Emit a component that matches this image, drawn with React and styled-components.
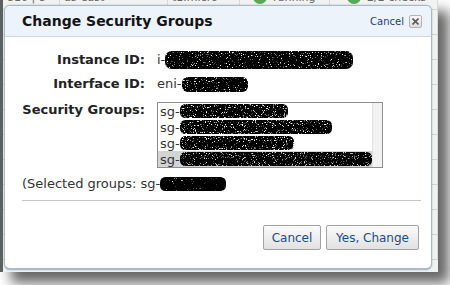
import React, { useId } from "react";
import styled, { createGlobalStyle } from "styled-components";

const GlobalStyle = createGlobalStyle`
  html, body { margin: 0; padding: 0; background: #ffffff; }
  body {
    width: 450px;
    height: 285px;
    overflow: hidden;
    font-family: "DejaVu Sans", Verdana, sans-serif;
  }
`;

const Frame = styled.div`
  position: relative;
  width: 438px;
  height: 272px;
  box-sizing: border-box;
  background: #f1f2f2;
  border-left: 3px solid #5c6060;
  box-shadow: 11px 11px 12px rgba(0, 0, 0, 0.6);
  overflow: hidden;
`;

const PageTable = styled.div`
  display: flex;
  flex-direction: column;
  margin-top: -15px;
`;

const PageRow = styled.div`
  display: grid;
  grid-template-columns: 57px 108px 72px 90px 1fr;
  height: 24px;
  border-bottom: 1px solid #cfd3d3;
  font-size: 11px;
  color: #666;
`;

const PageCell = styled.div`
  display: flex;
  align-items: center;
  gap: 6px;
  padding-left: ${(p) => p.$pad || 4}px;
  border-right: 1px solid #d7dada;
  white-space: nowrap;
  overflow: hidden;
`;

const StatusDot = styled.span`
  width: 14px;
  height: 14px;
  border-radius: 50%;
  background: #5aa955;
  flex: none;
`;

const Dialog = styled.div`
  position: absolute;
  left: 1px;
  top: 5px;
  width: 428px;
  height: 265px;
  box-sizing: border-box;
  display: flex;
  flex-direction: column;
  background: #ffffff;
  border: 1px solid #a9b9c8;
  border-bottom: 2px solid #a7bccd;
  border-radius: 6px;
  overflow: hidden;
  box-shadow: 0 0 2px rgba(0, 0, 0, 0.25);
`;

const Header = styled.div`
  display: flex;
  align-items: center;
  justify-content: space-between;
  height: 30px;
  padding: 0 9px 0 17px;
  background: #edf3fa;
  border-bottom: 1px solid #c9d6e3;
`;

const Title = styled.h1`
  margin: 0;
  font-size: 14px;
  font-weight: bold;
  color: #141414;
`;

const HeaderActions = styled.div`
  display: flex;
  align-items: center;
  gap: 5px;
`;

const HeaderLink = styled.span`
  font-family: "DejaVu Sans", sans-serif;
  font-size: 10px;
  color: #1f3d78;
`;

const CloseBox = styled.span`
  width: 13px;
  height: 13px;
  box-sizing: border-box;
  display: flex;
  align-items: center;
  justify-content: center;
  border: 1px solid #b3b3b3;
  border-radius: 2px;
  background: linear-gradient(#f7f7f7, #dcdcdc);
`;

const Body = styled.div`
  display: flex;
  flex-direction: column;
  padding: 15px 10px 0 17px;
`;

const Form = styled.div`
  display: grid;
  grid-template-columns: 123px 1fr;
  column-gap: 12px;
  row-gap: 8px;
  align-items: start;
`;

const Label = styled.div`
  text-align: right;
  font-size: 13px;
  font-weight: bold;
  line-height: 16px;
  color: #222;
  margin-top: ${(p) => p.$offset || 0}px;
`;

const Value = styled.div`
  display: flex;
  align-items: center;
  font-size: 13px;
  line-height: 16px;
  height: 16px;
  color: #333;
  white-space: nowrap;
`;

const ListBox = styled.div`
  display: flex;
  width: 226px;
  height: 66px;
  box-sizing: border-box;
  margin-top: 2px;
  border: 1px solid #8d8d8d;
  background: #fff;
  overflow: hidden;
`;

const Options = styled.div`
  flex: 1;
  display: flex;
  flex-direction: column;
`;

const Option = styled.div`
  display: flex;
  align-items: center;
  height: 16px;
  padding-left: 2px;
  font-size: 13px;
  color: #333;
  white-space: nowrap;
  background: ${(p) => (p.$selected ? "#d4d4d4" : "transparent")};
`;

const ScrollTrack = styled.div`
  width: 12px;
  background: #f2f2f2;
  border-left: 1px solid #e3e3e3;
`;

const Selected = styled.div`
  display: flex;
  align-items: center;
  margin-top: 8px;
  font-size: 13px;
  line-height: 16px;
  height: 16px;
  color: #333;
  white-space: nowrap;
`;

const Separator = styled.div`
  height: 1px;
  margin-top: 8px;
  background: #c6c6c6;
`;

const ButtonRow = styled.div`
  display: flex;
  justify-content: flex-end;
  gap: 5px;
  margin-top: 24px;
  padding-right: 2px;
`;

const Button = styled.button`
  height: 25px;
  width: ${(p) => p.$w}px;
  padding: 0;
  font-family: "DejaVu Sans", Verdana, sans-serif;
  font-size: 12px;
  color: #1d4b88;
  border: 1px solid #a2a2a2;
  border-radius: 2px;
  background: linear-gradient(#fbfbfb, #e1e1e1);
  box-shadow: inset 0 1px 0 #fff;
`;

function Redaction({ w, h = 16, seed = 1, level = -1.8 }) {
  const id = useId().replace(/:/g, "");
  return (
    <svg width={w} height={h} style={{ flex: "none" }} aria-hidden="true">
      <defs>
        <filter id={`n${id}`} x="0" y="0" width="100%" height="100%">
          <feTurbulence type="fractalNoise" baseFrequency="0.9" numOctaves="2" seed={seed} result="t" />
          <feColorMatrix
            in="t"
            type="matrix"
            values={`0 0 0 0 0  0 0 0 0 0  0 0 0 0 0  7 0 0 0 ${level}`}
            result="m"
          />
          <feComposite in="m" in2="SourceGraphic" operator="in" />
        </filter>
      </defs>
      <rect x="0" y="1" width={w} height={h - 2} rx={h / 3} fill="#000" filter={`url(#n${id})`} />
    </svg>
  );
}

const groups = [
  { w: 108, seed: 3 },
  { w: 152, seed: 7 },
  { w: 114, seed: 11 },
  { w: 192, seed: 5, selected: true },
];

export default function App() {
  return (
    <>
      <GlobalStyle />
      <Frame>
        <PageTable>
          {[0, 1, 2, 3, 4, 5, 6, 7, 8, 9, 10].map((i) => (
            <PageRow key={i}>
              <PageCell>{i === 0 ? "810 | 8" : ""}</PageCell>
              <PageCell>{i === 0 ? "us-east" : ""}</PageCell>
              <PageCell>{i === 0 ? "t1.micro" : ""}</PageCell>
              <PageCell $pad={13}>{i === 0 && <StatusDot />}{i === 0 ? "running" : ""}</PageCell>
              <PageCell $pad={17}>{i === 0 && <StatusDot />}{i === 0 ? "2/2 checks" : ""}</PageCell>
            </PageRow>
          ))}
        </PageTable>
        <Dialog>
          <Header>
            <Title>Change Security Groups</Title>
            <HeaderActions>
              <HeaderLink>Cancel</HeaderLink>
              <CloseBox>
                <svg width="7" height="7" viewBox="0 0 7 7">
                  <path d="M0.5 0.5 L6.5 6.5 M6.5 0.5 L0.5 6.5" stroke="#5a5a5a" strokeWidth="1.6" />
                </svg>
              </CloseBox>
            </HeaderActions>
          </Header>
          <Body>
            <Form>
              <Label>Instance ID:</Label>
              <Value>
                i-
                <Redaction w={188} h={20} seed={2} level={-1.6} />
              </Value>
              <Label>Interface ID:</Label>
              <Value>
                eni-
                <Redaction w={66} h={17} seed={9} level={-1.6} />
              </Value>
              <Label $offset={2}>Security Groups:</Label>
              <ListBox>
                <Options>
                  {groups.map((g, i) => (
                    <Option key={i} $selected={g.selected}>
                      sg-
                      <Redaction w={g.w} h={16} seed={g.seed} level={-1.8} />
                    </Option>
                  ))}
                </Options>
                <ScrollTrack />
              </ListBox>
            </Form>
            <Selected>
              (Selected groups: sg-
              <Redaction w={66} h={16} seed={13} level={-1.2} />
            </Selected>
            <Separator />
            <ButtonRow>
              <Button $w={58}>Cancel</Button>
              <Button $w={93}>Yes, Change</Button>
            </ButtonRow>
          </Body>
        </Dialog>
      </Frame>
    </>
  );
}
